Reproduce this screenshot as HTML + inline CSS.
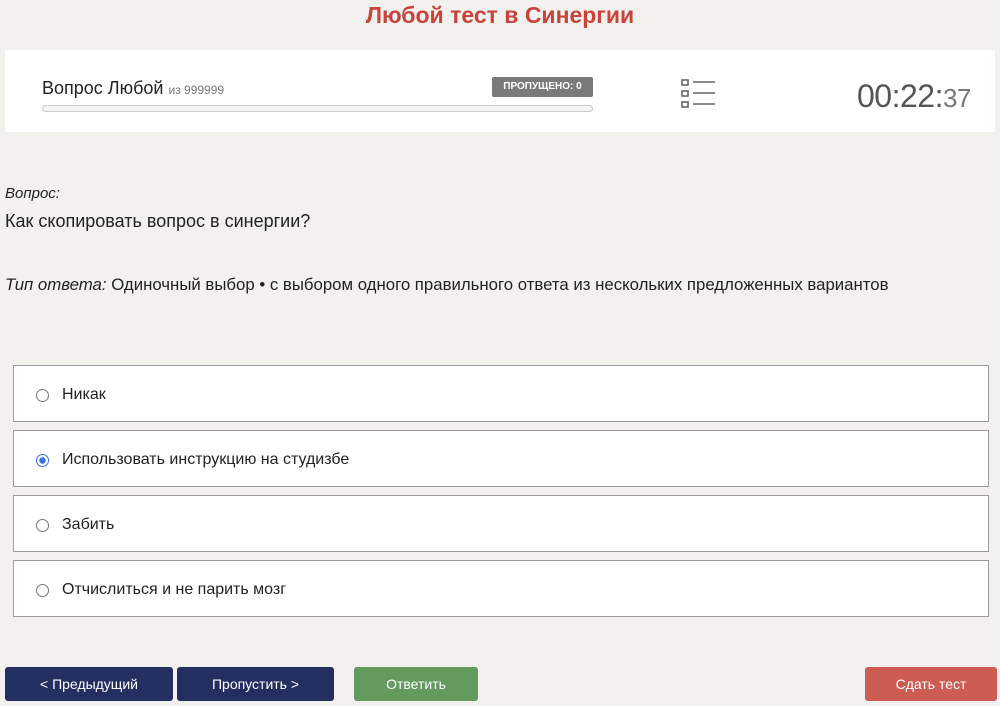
<!DOCTYPE html>
<html><head><meta charset="utf-8"><style>
body{margin:0;width:1000px;height:706px;background:#f2f1ee;font-family:"Liberation Sans",sans-serif;color:#222;position:relative;overflow:hidden}
.a{position:absolute}
h1{position:absolute;top:0;left:0;width:1000px;margin:0;text-align:center;color:#c9433d;font-size:23px;line-height:30px;font-weight:bold}
.panel{left:5px;top:50px;width:990px;height:82px;background:#fff}
.opt{left:13px;width:974px;height:55px;border:1px solid #9a9a9a;background:#fff}
.opt .r{position:absolute;left:22px;top:23px;width:11px;height:11px;border:1px solid #777;border-radius:50%;background:#fff}
.opt span{position:absolute;left:48px;top:20px;font-size:16px}
.btn{top:667px;height:34px;border-radius:3px;color:#fff;font-size:14px;line-height:34px;text-align:center}
</style></head><body>
<h1>Любой тест в Синергии</h1>
<div class="a panel">
 <div class="a" style="left:37px;top:28px;font-size:18px">Вопрос Любой <span style="font-size:12px;color:#777">из 999999</span></div>
 <div class="a" style="left:37px;top:55px;width:549px;height:5px;border:1px solid #ccc;border-radius:4px;background:#f5f5f5"></div>
 <div class="a" style="left:487px;top:27px;width:101px;height:20px;background:#7a7a7a;color:#fff;font-size:10px;font-weight:bold;line-height:20px;text-align:center;border-radius:2px">ПРОПУЩЕНО: 0</div>
 <svg class="a" style="left:676px;top:28px" width="36" height="32" viewBox="0 0 36 32" fill="none" stroke="#666" stroke-width="1.6"><rect x="1" y="2" width="6" height="5"/><rect x="1" y="13" width="6" height="5"/><rect x="1" y="24" width="6" height="5"/><path d="M12 4h22M12 15h22M12 26h22"/></svg>
 <div class="a" style="left:852px;top:28px;font-size:32px;color:#555;letter-spacing:-0.5px">00:22:<span style="font-size:26px;color:#777">37</span></div>
</div>
<div class="a" style="left:5px;top:185px;font-size:15px;font-style:italic">Вопрос:</div>
<div class="a" style="left:5px;top:211px;font-size:18px">Как скопировать вопрос в синергии?</div>
<div class="a" style="left:5px;top:275px;font-size:16.8px"><i>Тип ответа:</i> Одиночный выбор • с выбором одного правильного ответа из нескольких предложенных вариантов</div>
<div class="a opt" style="top:365px"><div class="r"></div><span>Никак</span></div>
<div class="a opt" style="top:430px"><div class="r" style="border-color:#3b6fe0;background:radial-gradient(circle,#3b6fe0 3px,#fff 3.5px)"></div><span>Использовать инструкцию на студизбе</span></div>
<div class="a opt" style="top:495px"><div class="r"></div><span>Забить</span></div>
<div class="a opt" style="top:560px"><div class="r"></div><span>Отчислиться и не парить мозг</span></div>
<div class="a btn" style="left:5px;width:168px;background:#232f60">&lt; Предыдущий</div>
<div class="a btn" style="left:177px;width:157px;background:#232f60">Пропустить &gt;</div>
<div class="a btn" style="left:354px;width:124px;background:#639a5e">Ответить</div>
<div class="a btn" style="left:865px;width:132px;background:#cd5c53">Сдать тест</div>
</body></html>
